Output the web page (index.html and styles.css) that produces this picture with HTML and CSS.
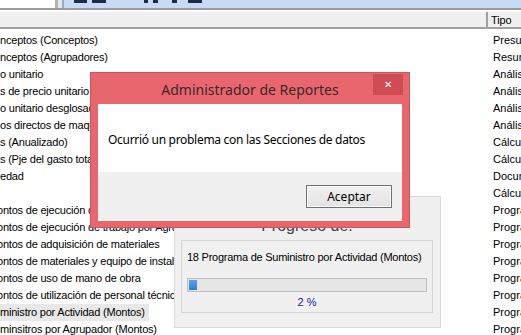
FILE: index.html
```html
<!DOCTYPE html>
<html lang="es">
<head>
    <meta charset="UTF-8">
    <title>Administrador de Reportes</title>
    <link rel="stylesheet" href="styles.css">
</head>
<body>
    <div class="toolbar">
        <div class="search"></div>
        <div class="tb-gap"></div>
        <div class="tb-sep"></div>
        <div class="tools">
            <span class="mark m1"></span>
            <span class="mark m2"></span>
            <span class="mark m3"></span>
            <span class="mark m4"></span>
            <span class="mark m5"></span>
            <span class="mark m6"></span>
        </div>
    </div>

    <div class="grid-head">
        <div class="head-row">
            <div class="head-name"></div>
            <div class="head-tipo">Tipo</div>
        </div>
    </div>

    <ul class="list">
        <li><span class="name">nceptos (Conceptos)</span><span class="tipo">Presupuesto</span></li>
        <li><span class="name">nceptos (Agrupadores)</span><span class="tipo">Resumen</span></li>
        <li><span class="name">o unitario</span><span class="tipo">Análisis</span></li>
        <li><span class="name">s de precio unitario</span><span class="tipo">Análisis</span></li>
        <li><span class="name">o unitario desglosado</span><span class="tipo">Análisis</span></li>
        <li><span class="name">os directos de maquinaria</span><span class="tipo">Análisis</span></li>
        <li><span class="name">s (Anualizado)</span><span class="tipo">Cálculo</span></li>
        <li><span class="name">s (Pje del gasto total)</span><span class="tipo">Cálculo</span></li>
        <li><span class="name">edad</span><span class="tipo">Documento</span></li>
        <li><span class="name"></span><span class="tipo">Cálculo</span></li>
        <li><span class="name cut">ontos de ejecución de trabajos</span><span class="tipo">Programa</span></li>
        <li><span class="name cut">ontos de ejecución de trabajo por Agrupador</span><span class="tipo">Programa</span></li>
        <li><span class="name cut">ontos de adquisición de materiales</span><span class="tipo">Programa</span></li>
        <li><span class="name cut">ontos de materiales y equipo de instalación</span><span class="tipo">Programa</span></li>
        <li><span class="name cut">ontos de uso de mano de obra</span><span class="tipo">Programa</span></li>
        <li><span class="name cut">ontos de utilización de personal técnico</span><span class="tipo">Programa</span></li>
        <li><span class="name"><span class="selected">ministro por Actividad (Montos)</span></span><span class="tipo">Programa</span></li>
        <li><span class="name">minsitros por Agrupador (Montos)</span><span class="tipo">Programa</span></li>
    </ul>

    <div class="progress-win">
        <div class="pw-title">Progreso de:</div>
        <div class="pw-group">
            <div class="pw-item">18 Programa de Suministro por Actividad (Montos)</div>
            <div class="pw-bar"><div class="pw-chunk"></div></div>
            <div class="pw-percent">2 %</div>
        </div>
    </div>

    <div class="dialog">
        <div class="dlg-title">
            Administrador de Reportes
            <span class="dlg-close">&#x2715;</span>
        </div>
        <div class="dlg-body">Ocurrió un problema con las Secciones de datos</div>
        <div class="dlg-footer">
            <button class="dlg-button">Aceptar</button>
        </div>
    </div>
</body>
</html>
```

FILE: styles.css
```css
html, body {
    margin: 0;
    width: 521px;
    height: 335px;
    overflow: hidden;
    background: #fff;
}
body {
    position: relative;
    font-family: "Liberation Sans", Arial, sans-serif;
    font-size: 11px;
    color: #000;
}

/* barra de herramientas (cortada arriba) */
.toolbar {
    display: flex;
    height: 8px;
    background: #c6dbf4;
}
.search {
    width: 55px;
    background: #fff;
    border-right: 3px solid #b2b2b2;
}
.tb-gap {
    width: 4px;
    background: #dfe7f1;
}
.tb-sep {
    width: 2px;
    background: #9eabbd;
}
.tools {
    display: flex;
    align-items: flex-start;
}
.mark {
    height: 3px;
    background: #1c2a4c;
}
.m1 { margin-left: 10px; width: 13px; }
.m2 { margin-left: 5px; width: 14px; }
.m3 { margin-left: 38px; width: 4px; }
.m4 { margin-left: 5px; width: 5px; }
.m5 { margin-left: 14px; width: 5px; }
.m6 { margin-left: 11px; width: 14px; }

/* cabecera de la lista */
.grid-head {
    border-top: 2px solid #9c9c9c;
    padding-top: 2px;
    background: #fff;
}
.head-row {
    display: grid;
    grid-template-columns: 488px 1fr;
    height: 15px;
    background: #f0f0f0;
    border-bottom: 2px solid #a0a0a0;
}
.head-name {
    border-right: 2px solid #a0a0a0;
}
.head-tipo {
    padding-left: 3px;
    line-height: 16px;
    letter-spacing: -0.1px;
}

/* lista de reportes */
.list {
    list-style: none;
    margin: 0;
    padding: 3px 0 0;
}
.list li {
    display: grid;
    grid-template-columns: 488px 1fr;
    height: 17px;
    line-height: 17px;
    white-space: nowrap;
    letter-spacing: -0.2px;
}
.name {
    overflow: hidden;
}
.name.cut {
    margin-left: -3px;
}
.selected {
    display: inline-block;
    background: #e8e8e8;
    padding-right: 4px;
}
.tipo {
    padding-left: 5px;
    overflow: hidden;
    letter-spacing: 0;
}

/* ventana de progreso */
.progress-win {
    position: absolute;
    left: 174px;
    top: 196px;
    width: 267px;
    height: 132px;
    box-sizing: border-box;
    background: #f0f0f0;
    border: 1px solid #dadada;
    padding: 0 7px 0 6px;
}
.pw-title {
    margin-top: 18px;
    height: 22px;
    line-height: 22px;
    margin-bottom: 3px;
    text-align: center;
    font-size: 16px;
    color: #444;
}
.pw-group {
    height: 73px;
    box-sizing: border-box;
    border: 1px solid #d5d5d5;
    padding: 9px 5px 0;
}
.pw-item {
    line-height: 14px;
    letter-spacing: -0.25px;
}
.pw-bar {
    margin-top: 14px;
    height: 14px;
    box-sizing: border-box;
    border: 1px solid #bcbcbc;
    background: #e6e6e6;
}
.pw-chunk {
    margin: 1px 0 0 1px;
    width: 8px;
    height: 10px;
    background: linear-gradient(#5aa2ea, #2c7fd6);
}
.pw-percent {
    margin-top: 3px;
    line-height: 14px;
    text-align: center;
    color: #23239a;
}

/* cuadro de mensaje */
.dialog {
    position: absolute;
    left: 90px;
    top: 72px;
    width: 320px;
    box-sizing: border-box;
    background: #e8676f;
    border: 1px solid #c9575f;
    padding: 0 7px 6px;
    font-family: "Noto Sans", "Open Sans", sans-serif;
}
.dlg-title {
    position: relative;
    height: 31px;
    line-height: 33px;
    text-align: center;
    font-size: 14px;
    color: #3a2729;
}
.dlg-close {
    position: absolute;
    top: 1px;
    right: -1px;
    width: 30px;
    height: 21px;
    line-height: 21px;
    background: #cf4c55;
    color: #fff;
    font-size: 10px;
}
.dlg-body {
    height: 68px;
    box-sizing: border-box;
    padding: 28px 0 0 10px;
    background: #fff;
    font-size: 12px;
    line-height: 16px;
    letter-spacing: -0.3px;
    color: #000;
}
.dlg-footer {
    display: flex;
    justify-content: flex-end;
    align-items: center;
    height: 49px;
    padding-right: 10px;
    background: #f0f0f0;
}
.dlg-button {
    width: 86px;
    height: 23px;
    font-family: inherit;
    font-size: 12px;
    color: #000;
    background: linear-gradient(#f0f0f0, #e3e3e3);
    border: 1px solid #707070;
    box-shadow: inset 0 0 0 1px #fafafa;
    padding: 0;
}
```
